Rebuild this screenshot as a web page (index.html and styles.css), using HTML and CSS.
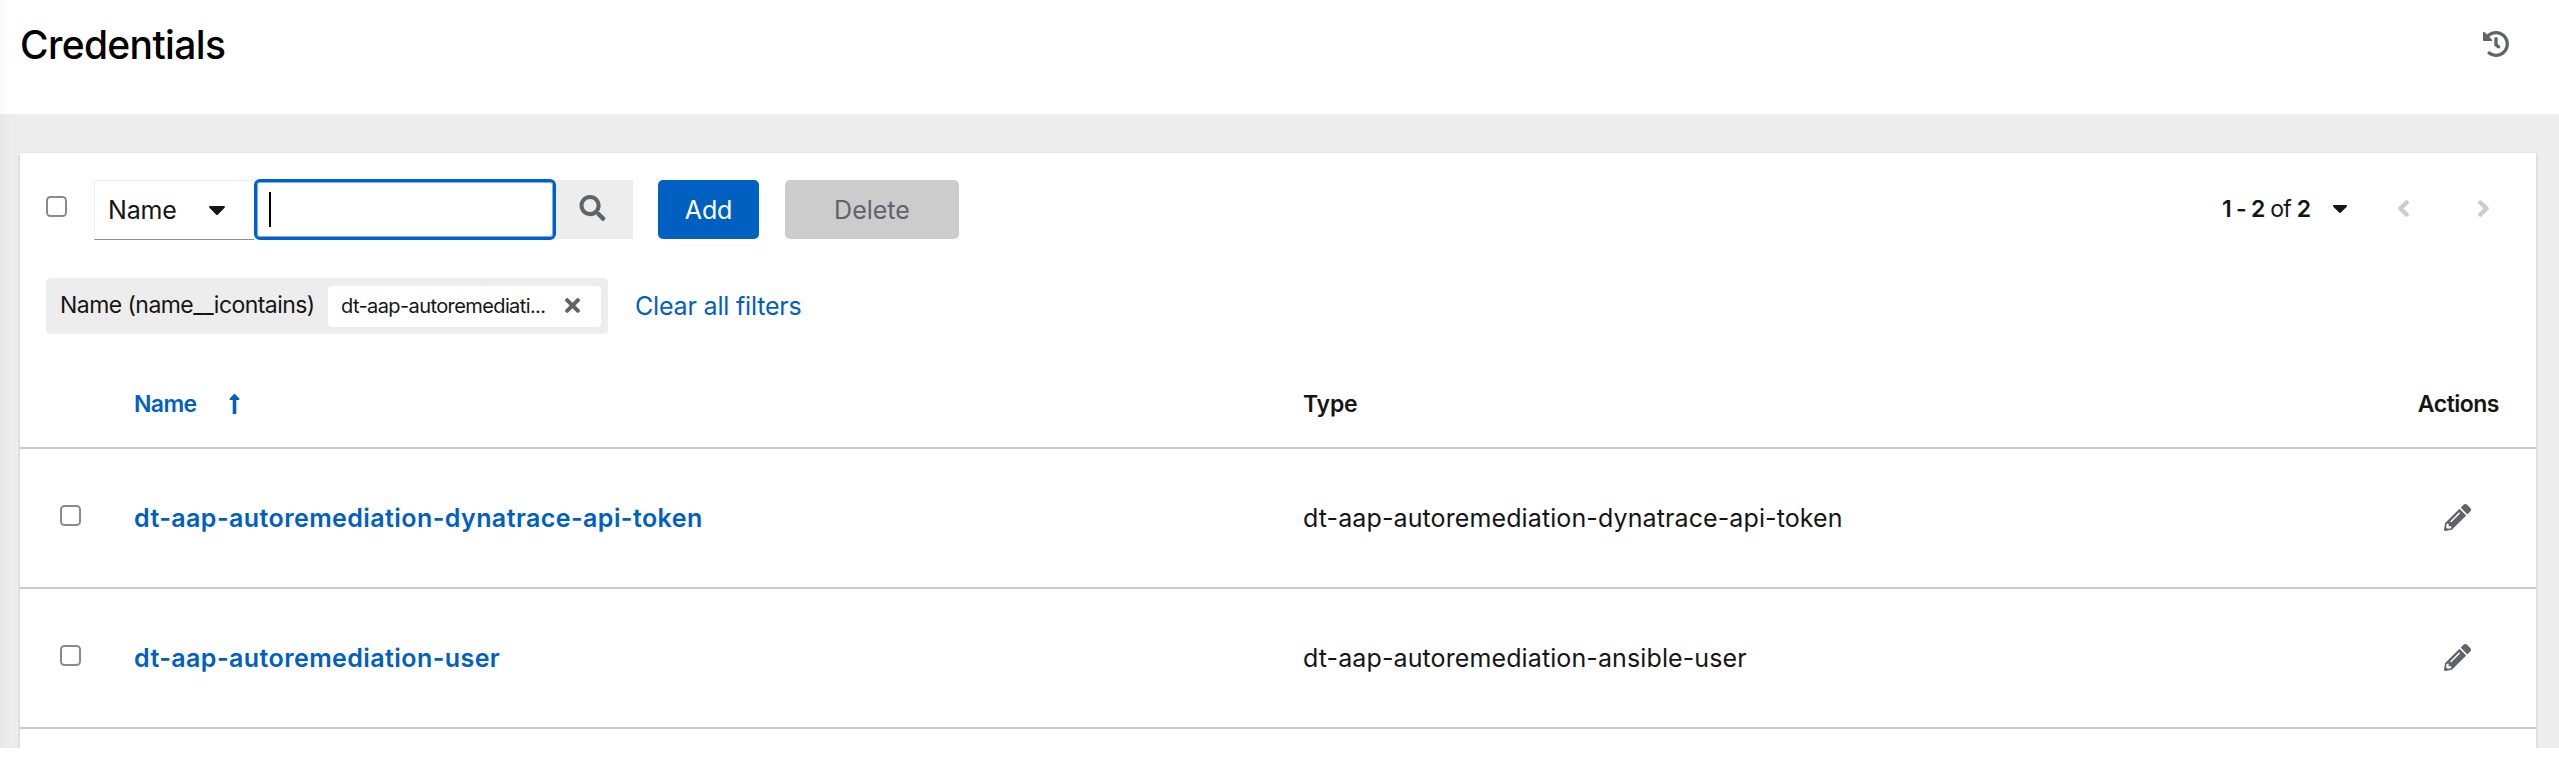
FILE: index.html
```html
<!DOCTYPE html>
<html lang="en">
<head>
<meta charset="utf-8">
<title>Credentials</title>
<link rel="stylesheet" href="styles.css">
</head>
<body>
<svg class="sprite" aria-hidden="true">
  <symbol id="caret" viewBox="11 192 298 169"><path d="M31.3 192h257.3c17.8 0 26.7 21.5 14.1 34.1L174.1 354.8c-7.8 7.8-20.5 7.8-28.3 0L17.2 226.1C4.6 213.5 13.5 192 31.3 192z"/></symbol>
  <symbol id="angle" viewBox="24 96 208 320"><path d="M31.7 239l136-136c9.4-9.4 24.6-9.4 33.9 0l22.6 22.6c9.4 9.4 9.4 24.6 0 33.9L127.9 256l96.4 96.4c9.4 9.4 9.4 24.6 0 33.9L201.7 409c-9.4 9.4-24.6 9.4-33.9 0l-136-136c-9.5-9.4-9.5-24.6-.1-34z"/></symbol>
  <symbol id="pencil" viewBox="0 0 512 512"><path d="M497.9 142.1l-46.1 46.1c-4.7 4.7-12.3 4.7-17 0l-111-111c-4.7-4.7-4.7-12.3 0-17l46.1-46.1c18.7-18.7 49.1-18.7 67.9 0l60.1 60.1c18.8 18.7 18.8 49.1 0 67.9zM284.2 99.8L21.6 362.4.4 483.9c-2.9 16.4 11.4 30.6 27.8 27.8l121.5-21.3 262.6-262.6c4.7-4.7 4.7-12.3 0-17l-111-111c-4.8-4.7-12.4-4.7-17.1 0zM124.1 339.9c-5.5-5.5-5.5-14.3 0-19.8l154-154c5.5-5.5 14.3-5.5 19.8 0s5.5 14.3 0 19.8l-154 154c-5.5 5.5-14.3 5.5-19.8 0zM88 424h48v36.3l-64.5 11.3-31.1-31.1L51.7 376H88v48z"/></symbol>
</svg>
<header class="page-header">
  <h1 class="title">Credentials</h1>
  <svg class="history" viewBox="8 8 496 496"><path d="M504 255.531c.253 136.64-111.18 248.372-247.82 248.468-59.015.042-113.223-20.53-155.822-54.911-11.077-8.94-11.905-25.541-1.839-35.607l11.267-11.267c8.609-8.609 22.353-9.551 31.891-1.984C173.062 425.135 212.781 440 256 440c101.705 0 184-82.311 184-184 0-101.705-82.311-184-184-184-48.814 0-93.149 18.969-126.068 49.932l50.754 50.754c10.08 10.08 2.941 27.314-11.313 27.314H24c-8.837 0-16-7.163-16-16V38.627c0-14.254 17.234-21.393 27.314-11.314l49.372 49.372C129.209 34.136 189.552 8 256 8c136.81 0 247.747 110.78 248 247.531zm-180.912 78.784l9.823-12.63c8.138-10.463 6.253-25.542-4.21-33.679L288 256.349V152c0-13.255-10.745-24-24-24h-16c-13.255 0-24 10.745-24 24v135.651l65.409 50.874c10.463 8.137 25.541 6.253 33.679-4.21z"/></svg>
</header>
<main class="content">
  <section class="card">
    <div class="toolbar">
      <span class="check"></span>
      <div class="select"><span class="select-text">Name</span><svg class="select-caret"><use href="#caret"/></svg></div>
      <div class="search-input"><span class="cursor"></span></div>
      <div class="search-button"><svg class="search-icon" viewBox="0 0 512 512"><path d="M505 442.7L405.3 343c-4.5-4.5-10.6-7-17-7H372c27.6-35.3 44-79.7 44-128C416 93.1 322.9 0 208 0S0 93.1 0 208s93.1 208 208 208c48.3 0 92.7-16.4 128-44v16.3c0 6.4 2.5 12.5 7 17l99.7 99.7c9.4 9.4 24.6 9.4 33.9 0l28.3-28.3c9.4-9.4 9.4-24.6.1-34zM208 336c-70.7 0-128-57.2-128-128 0-70.7 57.2-128 128-128 70.7 0 128 57.2 128 128 0 70.7-57.2 128-128 128z"/></svg></div>
      <div class="button add"><span class="add-text">Add</span></div>
      <div class="button delete"><span class="delete-text">Delete</span></div>
      <div class="pagination">
        <span class="range"><b>1 - 2</b> of <b>2</b></span>
        <svg class="page-caret"><use href="#caret"/></svg>
        <svg class="angle prev"><use href="#angle"/></svg>
        <svg class="angle next"><use href="#angle"/></svg>
      </div>
    </div>
    <div class="filters">
      <div class="chip-group">
        <span class="chip-label">Name (name__icontains)</span>
        <div class="chip"><span class="chip-text">dt-aap-autoremediati...</span><svg class="times" viewBox="0 80 352 352"><path d="M242.72 256l100.07-100.07c12.28-12.28 12.28-32.19 0-44.48l-22.24-22.24c-12.28-12.28-32.19-12.28-44.48 0L176 189.28 75.93 89.21c-12.28-12.28-32.19-12.28-44.48 0L9.21 111.45c-12.28 12.28-12.28 32.19 0 44.48L109.28 256 9.21 356.07c-12.28 12.28-12.28 32.19 0 44.48l22.24 22.24c12.28 12.28 32.2 12.28 44.48 0L176 322.72l100.07 100.07c12.28 12.28 32.2 12.28 44.48 0l22.24-22.24c12.28-12.28 12.28-32.19 0-44.48L242.72 256z"/></svg></div>
      </div>
      <a class="clear">Clear all filters</a>
    </div>
    <div class="row head">
      <span class="name-head"><span class="th-name">Name</span><svg class="sort" viewBox="20 32 216 448"><path d="M88 166.059V468c0 6.627 5.373 12 12 12h56c6.627 0 12-5.373 12-12V166.059h46.059c21.382 0 32.09-25.851 16.971-40.971l-86.059-86.059c-9.373-9.373-24.569-9.373-33.941 0l-86.059 86.059c-15.119 15.119-4.411 40.971 16.971 40.971H88z"/></svg></span>
      <span class="th-type">Type</span>
      <span class="th-actions">Actions</span>
    </div>
    <div class="row">
      <span class="check"></span>
      <a class="link">dt-aap-autoremediation-dynatrace-api-token</a>
      <span class="type">dt-aap-autoremediation-dynatrace-api-token</span>
      <svg class="pencil"><use href="#pencil"/></svg>
    </div>
    <div class="row">
      <span class="check"></span>
      <a class="link">dt-aap-autoremediation-user</a>
      <span class="type">dt-aap-autoremediation-ansible-user</span>
      <svg class="pencil"><use href="#pencil"/></svg>
    </div>
  </section>
</main>
</body>
</html>
```
FILE: styles.css
```css
* { box-sizing: border-box; }
body {
  margin: 0;
  height: 769px;
  overflow: hidden;
  background: #fff;
  color: #151515;
  font-family: Inter, "Open Sans", sans-serif;
  font-size: 25px;
  line-height: 36px;
  white-space: nowrap;
}
svg { display: block; flex: none; fill: #5f646b; }
.sprite { display: none; }
.page-header {
  height: 114px;
  display: flex;
  justify-content: space-between;
  padding: 21px 50px 0 20px;
  background: linear-gradient(90deg, #fafafa, #fff 12px);
}
.title { margin: 0; font-size: 39px; font-weight: 500; line-height: 48px; letter-spacing: -.65px; color: #000; }
.history { width: 26px; height: 26px; margin-top: 10px; }
.content {
  height: 634px;
  overflow: hidden;
  padding: 39px 23px 0 20px;
  background: linear-gradient(90deg, #e8e8e8, #ededed 12px);
}
.card { height: 620px; background: #fff; box-shadow: 0 1px 3px rgba(0, 0, 0, .2); }
.toolbar { height: 113px; padding: 26px 0 0 26px; display: flex; align-items: flex-start; }
.check { width: 21px; height: 21px; border: 2px solid #8a8a8a; border-radius: 4.5px; flex: none; }
.toolbar .check { margin: 17px 27px 0 0; }
.select {
  width: 160px;
  height: 60px;
  margin-top: 1px;
  border: 1px solid #ededed;
  border-right: 0;
  border-bottom-color: #8a8d90;
  display: flex;
  align-items: center;
  padding-left: 13px;
}
.select-text { width: 101px; letter-spacing: -.2px; }
.select-caret { width: 16px; height: 9px; fill: #151515; }
.search-input {
  width: 302px;
  height: 61px;
  border: 3px solid #005fcc;
  border-radius: 6px;
  padding: 10px 0 0 12px;
  box-shadow: inset 0 0 0 1px #7ab0ec;
}
.cursor { display: block; width: 2px; height: 35px; background: #000; }
.search-button { width: 77px; height: 59px; margin-top: 1px; background: #ededed; padding: 15px 0 0 23px; }
.search-icon { width: 27px; height: 26px; }
.button { height: 59px; border-radius: 5px; margin-top: 1px; display: flex; align-items: center; justify-content: center; }
.add { width: 101px; margin-left: 25px; background: #0060c2; color: #fff; letter-spacing: -.2px; }
.delete { width: 174px; margin-left: 26px; background: #ccc; color: #5f646b; }
.pagination { margin: 12px 47px 0 auto; height: 36px; display: flex; align-items: center; }
.range { width: 110px; font-size: 23px; letter-spacing: -.75px; margin-left: -1px; margin-right: 1px; }
.range b { font-weight: 600; }
.page-caret { width: 14px; height: 8px; margin-right: 51px; fill: #151515; }
.angle { width: 11px; height: 17px; margin-top: -2px; fill: #ccc; }
.next { margin-left: 69px; transform: scaleX(-1); }
.filters { height: 86px; padding: 12px 0 0 26px; display: flex; align-items: flex-start; }
.chip-group { width: 562px; height: 56px; border-radius: 5px; background: #ededed; display: flex; padding: 8px 7px 0 14px; }
.chip-label { width: 268px; font-size: 23px; line-height: 39px; letter-spacing: -.55px; }
.chip { width: 273px; height: 41px; border-radius: 4px; background: #fff; display: flex; align-items: center; padding-left: 13px; }
.chip-text { width: 224px; font-size: 20px; line-height: 34px; margin-top: -1px; letter-spacing: -.6px; }
.times { width: 15px; height: 15px; margin-top: -2px; }
.clear { margin: 10px 0 0 27px; color: #0060c2; letter-spacing: -.18px; }
.row {
  height: 140px;
  border-bottom: 2px solid #ccc;
  display: grid;
  grid-template-columns: 75px 1169px 1fr auto;
  padding: 0 65px 0 39px;
  align-items: center;
}
.row .check { margin: -5px 0 0 1px; }
.link { color: #0060c2; font-weight: 600; letter-spacing: .43px; }
.type { letter-spacing: .11px; }
.pencil { width: 27px; height: 27px; margin-top: -2px; }
.head { height: 97px; padding: 34px 37px 0 39px; font-size: 23px; font-weight: 600; align-items: start; }
.name-head { grid-column: 2; display: flex; align-items: center; color: #0060c2; }
.th-name { width: 95px; letter-spacing: -.6px; }
.th-type { letter-spacing: -.2px; }
.th-actions { letter-spacing: -.5px; }
.sort { width: 11px; height: 20px; fill: #0060c2; }
```
